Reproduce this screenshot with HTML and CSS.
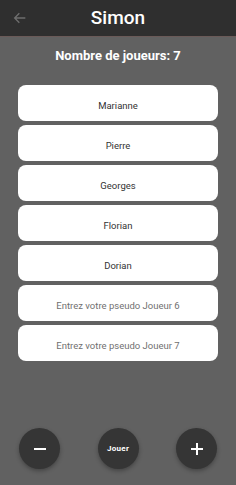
FILE: index.html
```html
<!DOCTYPE html>
<html lang="fr">
<head>
    <meta charset="UTF-8">
    <meta name="viewport" content="width=device-width, initial-scale=1.0">
    <title>Simon</title>
    <link rel="stylesheet" href="styles.css">
</head>
<body>
    <div class="app">
        <header class="top-bar">
            <button class="back-btn" aria-label="Retour">
                <svg width="16" height="16" viewBox="0 0 24 24">
                    <path d="M20 12H5M11 5l-7 7 7 7" fill="none" stroke="#6e6e6e" stroke-width="2"/>
                </svg>
            </button>
            <h1 class="title">Simon</h1>
        </header>

        <main class="content">
            <h2 class="player-count">Nombre de joueurs: 7</h2>

            <div class="player-list">
                <div class="player-card">Marianne</div>
                <div class="player-card">Pierre</div>
                <div class="player-card">Georges</div>
                <div class="player-card">Florian</div>
                <div class="player-card">Dorian</div>
                <div class="player-card placeholder">Entrez votre pseudo Joueur 6</div>
                <div class="player-card placeholder">Entrez votre pseudo Joueur 7</div>
            </div>
        </main>

        <footer class="actions">
            <button class="round-btn">
                <svg width="14" height="14" viewBox="0 0 14 14"><path d="M1 7h12" stroke="#fff" stroke-width="2"/></svg>
            </button>
            <button class="round-btn play">Jouer</button>
            <button class="round-btn">
                <svg width="14" height="14" viewBox="0 0 14 14"><path d="M1 7h12M7 1v12" stroke="#fff" stroke-width="2"/></svg>
            </button>
        </footer>
    </div>
</body>
</html>
```

FILE: styles.css
```css
:root {
    --bar-bg: #2f2f2f;
    --page-bg: #616161;
    --card-bg: #ffffff;
    --btn-bg: #353535;
}

* {
    margin: 0;
    padding: 0;
    box-sizing: border-box;
    font-family: Roboto, "Noto Sans", Arial, sans-serif;
}

body {
    background-color: var(--page-bg);
    width: 236px;
    height: 485px;
    overflow: hidden;
}

.app {
    display: flex;
    flex-direction: column;
    height: 485px;
}

.top-bar {
    height: 37px;
    background-color: var(--bar-bg);
    border-bottom: 1px solid #6a5a58;
    display: flex;
    align-items: center;
    justify-content: center;
    position: relative;
}

.back-btn {
    position: absolute;
    left: 12px;
    top: 10px;
    background: none;
    border: none;
    display: flex;
}

.title {
    color: #fff;
    font-size: 19px;
    font-weight: 500;
    margin-top: -1px;
}

.content {
    flex: 1;
    padding: 0 18px 0 18px;
}

.player-count {
    color: #fff;
    font-size: 13px;
    font-weight: 700;
    text-align: center;
    margin-top: 11px;
    margin-bottom: 22px;
}

.player-list {
    display: flex;
    flex-direction: column;
    gap: 4px;
}

.player-card {
    background-color: var(--card-bg);
    border-radius: 8px;
    height: 36px;
    display: flex;
    align-items: center;
    justify-content: center;
    padding-top: 5px;
    font-size: 9.5px;
    color: #333;
}

.player-card.placeholder {
    color: #707070;
}

.actions {
    display: flex;
    justify-content: space-between;
    padding: 0 19px 16px 19px;
}

.round-btn {
    width: 41px;
    height: 41px;
    border-radius: 50%;
    border: none;
    background-color: var(--btn-bg);
    box-shadow: 0 2px 4px rgba(0, 0, 0, 0.3);
    display: flex;
    align-items: center;
    justify-content: center;
    color: #fff;
}

.round-btn.play {
    font-size: 8px;
    font-weight: 700;
    letter-spacing: 0.3px;
}
```
